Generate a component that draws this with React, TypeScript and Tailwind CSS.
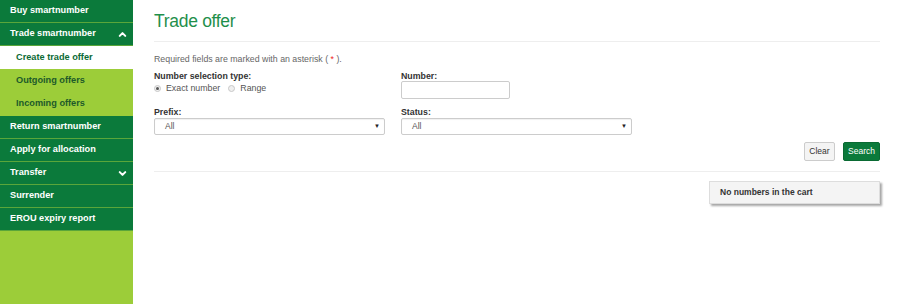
import { ChevronDown, ChevronUp } from 'lucide-react';

const font = { fontFamily: '"Liberation Sans", Arial, sans-serif' };

function MainItem({ label, icon }: { label: string; icon?: 'up' | 'down' }) {
  return (
    <div className="h-[23px] bg-[#0b7a3b] border-b border-[#5aa63a] flex items-center justify-between pl-[10px] pr-[5px] text-white text-[9.2px] font-bold">
      <span>{label}</span>
      {icon === 'up' && <ChevronUp size={11} strokeWidth={4.5} />}
      {icon === 'down' && <ChevronDown size={11} strokeWidth={4.5} />}
    </div>
  );
}

function SubItem({ label, active }: { label: string; active?: boolean }) {
  return (
    <div
      className={
        'h-[23px] flex items-center pl-[16px] text-[9.2px] font-bold ' +
        (active ? 'bg-white text-[#0b6a35]' : 'bg-[#9ccd39] text-[#1d5a2a]')
      }
    >
      {label}
    </div>
  );
}

function Radio({ checked, label }: { checked?: boolean; label: string }) {
  return (
    <label className="flex items-center gap-[5px]">
      <span className="w-[7px] h-[7px] rounded-full border border-[#c8c8c8] bg-[#f0f0f0] flex items-center justify-center">
        {checked && <span className="w-[3px] h-[3px] rounded-full bg-[#555]" />}
      </span>
      <span>{label}</span>
    </label>
  );
}

function Select() {
  return (
    <div className="w-[231px] h-[17px] border border-[#ccc] rounded-[2px] bg-white flex items-center justify-between pl-[10px] pr-[4px] text-[8.5px] text-[#555] shadow-[inset_0_1px_1px_rgba(0,0,0,0.06)]">
      <span>All</span>
      <span className="text-[6px] text-[#222]">▼</span>
    </div>
  );
}

export default function App() {
  return (
    <div className="flex w-[900px] h-[304px] bg-white" style={font}>
      <div className="w-[133px] bg-[#9ccd39] shrink-0">
        <MainItem label="Buy smartnumber" />
        <MainItem label="Trade smartnumber" icon="up" />
        <SubItem label="Create trade offer" active />
        <SubItem label="Outgoing offers" />
        <SubItem label="Incoming offers" />
        <div className="h-px" />
        <MainItem label="Return smartnumber" />
        <MainItem label="Apply for allocation" />
        <MainItem label="Transfer" icon="down" />
        <MainItem label="Surrender" />
        <MainItem label="EROU expiry report" />
      </div>

      <div className="flex-1 pl-[21px] pr-[20px]">
        <h1 className="text-[17.5px] tracking-[-0.3px] text-[#1f8f4b] leading-none pt-[13px] pb-[10px] border-b border-[#eee]">Trade offer</h1>

        <p className="text-[8.8px] text-[#666] mt-[12px] leading-[11px]">
          Required fields are marked with an asterisk ( <span className="text-[#e22]">*</span> ).
        </p>

        <div className="grid grid-cols-[247px_1fr] mt-[6px] text-[8.8px] text-[#555]">
          <div>
            <div className="font-bold text-[#333] h-[11px] leading-[11px]">Number selection type:</div>
            <div className="flex gap-[8px] mt-[1px] leading-[11px]">
              <Radio checked label="Exact number" />
              <Radio label="Range" />
            </div>
          </div>
          <div>
            <div className="font-bold text-[#333] h-[11px] leading-[11px]">Number:</div>
            <div className="w-[109px] h-[18px] -mt-[1px] border border-[#ccc] rounded-[2px] bg-white" />
          </div>

          <div className="mt-[8px]">
            <div className="font-bold text-[#333] h-[11px] leading-[11px]">Prefix:</div>
            <Select />
          </div>
          <div className="mt-[8px]">
            <div className="font-bold text-[#333] h-[11px] leading-[11px]">Status:</div>
            <Select />
          </div>
        </div>

        <div className="flex justify-end gap-[8px] mt-[7px] pb-[10px] border-b border-[#eee]">
          <button className="h-[19px] w-[31px] text-[8.5px] text-[#333] bg-[#f4f4f4] border border-[#ccc] rounded-[2px]">Clear</button>
          <button className="h-[19px] w-[37px] text-[8.5px] text-white bg-[#0b7a3b] border border-[#0a6a33] rounded-[2px]">Search</button>
        </div>

        <div className="flex justify-end mt-[9px]">
          <div className="w-[171px] h-[23px] bg-[#f4f4f4] border border-[#ddd] shadow-[2px_2px_2px_rgba(0,0,0,0.35)] flex items-center pl-[10px] text-[8.5px] font-bold text-[#333]">
            No numbers in the cart
          </div>
        </div>
      </div>
    </div>
  );
}
